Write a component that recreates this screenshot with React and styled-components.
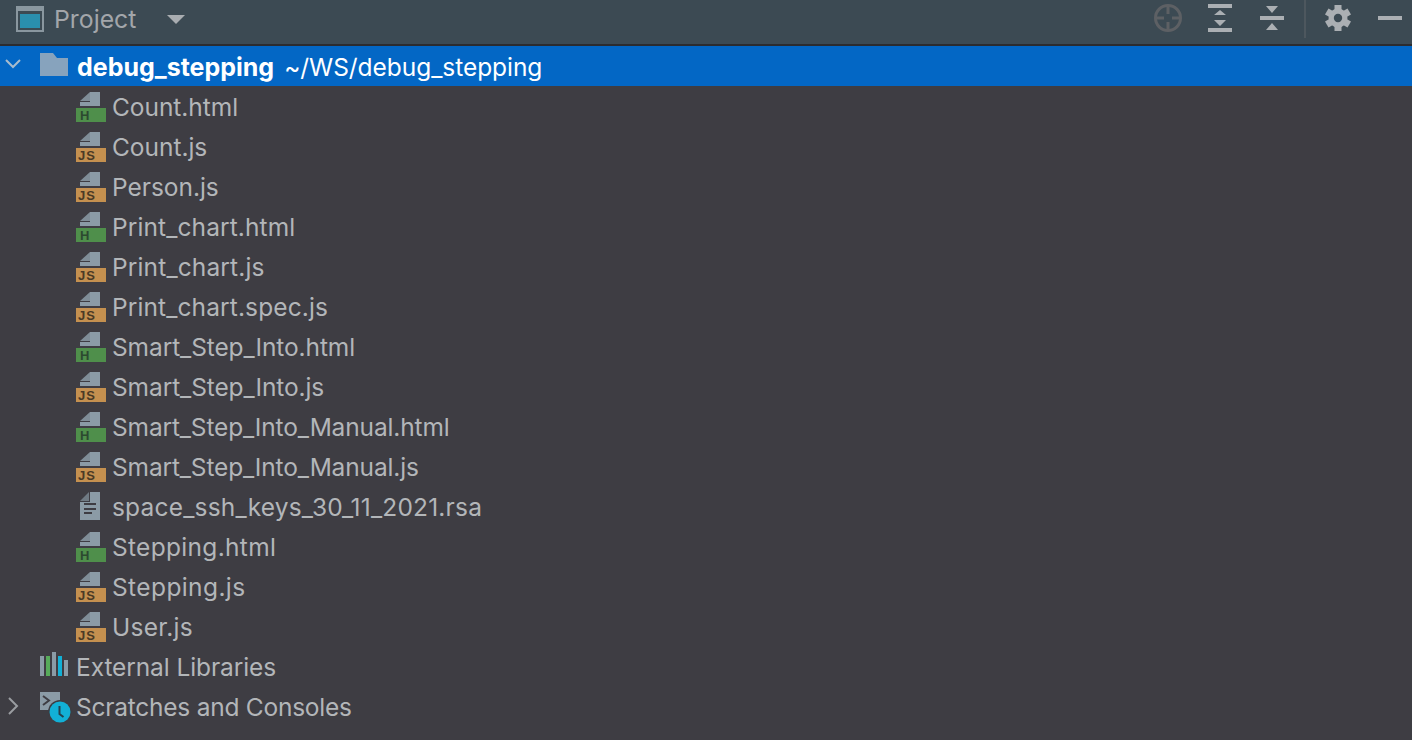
import React from "react";
import styled, { createGlobalStyle } from "styled-components";

const GlobalStyle = createGlobalStyle`
  html, body {
    margin: 0;
    padding: 0;
    background: #3e3d43;
  }
  body {
    font-family: Inter, "Liberation Sans", sans-serif;
  }
`;

// tracking = letter spacing per row, Inter's widths differ a bit from the original font
const files = [
  { name: "Count.html", type: "html", tracking: -0.05 },
  { name: "Count.js", type: "js", tracking: -0.03 },
  { name: "Person.js", type: "js", tracking: -0.04 },
  { name: "Print_chart.html", type: "html", tracking: 0.1 },
  { name: "Print_chart.js", type: "js", tracking: 0.14 },
  { name: "Print_chart.spec.js", type: "js", tracking: 0.11 },
  { name: "Smart_Step_Into.html", type: "html", tracking: -0.1 },
  { name: "Smart_Step_Into.js", type: "js", tracking: -0.1 },
  { name: "Smart_Step_Into_Manual.html", type: "html", tracking: -0.15 },
  { name: "Smart_Step_Into_Manual.js", type: "js", tracking: -0.15 },
  { name: "space_ssh_keys_30_11_2021.rsa", type: "text", tracking: 0.19 },
  { name: "Stepping.html", type: "html", tracking: 0.31 },
  { name: "Stepping.js", type: "js", tracking: 0.4 },
  { name: "User.js", type: "js", tracking: 0.28 },
];

const FileIcon = ({ type }) => {
  if (type === "text") {
    return (
      <svg width="30" height="28" viewBox="0 0 30 28">
        <path d="M14 0h10v28H4V10h10z" fill="#8b9ba6" />
        <path d="M4 9l9-9v9z" fill="#6f7a83" />
        <path d="M8 11h12v2H8zM8 16h12v2H8zM8 20h8v2H8z" fill="#3e3d43" />
      </svg>
    );
  }
  const isHtml = type === "html";
  return (
    <BadgeSvg width="30" height="30" viewBox="0 0 30 30">
      <path d="M4 9l10-9v9z" fill="#7f8d97" />
      <path d="M14 0h10v14H14z" fill="#8b9ba6" />
      <path d="M4 10h20v4H4z" fill="#8b9ba6" />
      <path d="M0 16h30v14H0z" fill={isHtml ? "#4f8f4b" : "#c4904f"} />
      <BadgeText $html={isHtml} x={isHtml ? 4 : 2} y="27.500">
        {isHtml ? "H" : "JS"}
      </BadgeText>
    </BadgeSvg>
  );
};

const ProjectIcon = () => (
  <svg width="28" height="26" viewBox="0 0 28 26">
    <path d="M0 0h28v26H0z" fill="#8a979f" />
    <path d="M2 5h24v19H2z" fill="#3c4a53" />
    <path d="M4 8h20v14H4z" fill="#2a8fae" />
  </svg>
);

const Caret = () => (
  <svg width="18" height="9" viewBox="0 0 18 9">
    <path d="M0 0h18L9 9z" fill="#a9adb1" />
  </svg>
);

const LocateIcon = () => (
  <svg width="30" height="30" viewBox="0 0 30 30" fill="none">
    <circle cx="15" cy="15" r="12.500" stroke="#5d6064" strokeWidth="3" />
    <path d="M15 3v8M15 19v8M3 15h8M19 15h8" stroke="#5d6064" strokeWidth="3" />
  </svg>
);

const ExpandIcon = () => (
  <svg width="24" height="28" viewBox="0 0 24 28">
    <path d="M0 0h24v4H0zM0 24h24v4H0z" fill="#abafb3" />
    <path d="M12 6l6 5H6zM6 16h12l-6 6z" fill="#abafb3" />
  </svg>
);

const CollapseIcon = () => (
  <svg width="24" height="24" viewBox="0 0 24 24">
    <path d="M0 10h24v4H0z" fill="#abafb3" />
    <path d="M6 0h12l-6 7zM12 17l6 7H6z" fill="#abafb3" />
  </svg>
);

const GearIcon = () => (
  <svg width="26" height="26" viewBox="0 0 26 26">
    <circle cx="13" cy="13" r="9.500" fill="#abafb3" />
    {[0, 60, 120].map((angle) => (
      <rect
        key={angle}
        x="9.500"
        y="0"
        width="7"
        height="26"
        fill="#abafb3"
        transform={`rotate(${angle} 13 13)`}
      />
    ))}
    <circle cx="13" cy="13" r="4.200" fill="#3c4a53" />
  </svg>
);

const FolderIcon = () => (
  <svg width="28" height="26" viewBox="0 0 28 26">
    <path d="M0 0h13l4 5h11v18H0z" fill="#87a3bd" />
  </svg>
);

const LibrariesIcon = () => (
  <svg width="28" height="28" viewBox="0 0 28 28">
    <path d="M0 4h4v20H0z" fill="#8b9ba6" />
    <path d="M6 4h4v20H6z" fill="#57ab5a" />
    <path d="M12 0h4v24h-4z" fill="#8b9ba6" />
    <path d="M18 4h4v20h-4z" fill="#12b0d6" />
    <path d="M24 8h4v16h-4z" fill="#8b9ba6" />
  </svg>
);

const ScratchIcon = () => (
  <ScratchSvg width="28" height="28" viewBox="0 0 28 28" fill="none">
    <path d="M0 0h20v18H0z" fill="#8b9ba6" />
    <path d="M3 4l6 4.500-6 4.500" stroke="#3e3d43" strokeWidth="2" />
    <circle cx="20" cy="20" r="12" fill="#3e3d43" />
    <circle cx="20" cy="20" r="10.500" fill="#12b0d6" />
    <path d="M19.500 14v8l4 3" stroke="#26404d" strokeWidth="2" />
  </ScratchSvg>
);

const Chevron = ({ open }) => (
  <svg width="18" height="18" viewBox="0 0 18 18" fill="none">
    <path
      d={open ? "M2 3l7 7 7-7" : "M5 1l8 8-8 8"}
      stroke={open ? "#a9bccd" : "#9a9da1"}
      strokeWidth="2"
    />
  </svg>
);

const App = () => {
  return (
    <Page>
      <GlobalStyle />
      <Toolbar>
        <ProjectIcon />
        <ToolbarTitle>Project</ToolbarTitle>
        <Caret />
        <ToolbarActions>
          <Action>
            <LocateIcon />
          </Action>
          <Action $left={25}>
            <ExpandIcon />
          </Action>
          <Action $left={28}>
            <CollapseIcon />
          </Action>
          <Separator />
          <Action $left={19}>
            <GearIcon />
          </Action>
          <MinimizeBar />
        </ToolbarActions>
      </Toolbar>
      <Tree>
        <RootRow>
          <Toggle>
            <Chevron open />
          </Toggle>
          <FolderIcon />
          <RootName>debug_stepping</RootName>
          <RootPath>~/WS/debug_stepping</RootPath>
        </RootRow>
        {files.map((file) => (
          <FileRow key={file.name}>
            <FileIcon type={file.type} />
            <FileLabel $tracking={file.tracking}>{file.name}</FileLabel>
          </FileRow>
        ))}
        <Row>
          <Toggle />
          <LibrariesIcon />
          <RowLabel $tracking={-0.1}>External Libraries</RowLabel>
        </Row>
        <Row>
          <Toggle>
            <Chevron />
          </Toggle>
          <ScratchIcon />
          <RowLabel $tracking={-0.24}>Scratches and Consoles</RowLabel>
        </Row>
      </Tree>
    </Page>
  );
};

export default App;

const Page = styled.div`
  width: 1412px;
  height: 740px;
  overflow: hidden;
  background: #3e3d43;
`;
const Toolbar = styled.div`
  display: flex;
  align-items: center;
  height: 38px;
  padding: 0 10px 6px 16px;
  background: #3c4a53;
  border-bottom: 2px solid #2c2c2f;
`;
const ToolbarTitle = styled.div`
  margin: 0 31px 0 10px;
  font-size: 24.800px;
  color: #a3a6aa;
  line-height: 38px;
`;
const ToolbarActions = styled.div`
  display: flex;
  align-items: center;
  margin-left: auto;
  height: 36px;
  align-self: flex-start;
`;
const Action = styled.div`
  display: flex;
  margin-left: ${(props) => props.$left || 0}px;
`;
const Separator = styled.div`
  align-self: flex-start;
  width: 2px;
  height: 38px;
  margin-left: 20px;
  background: #4d575e;
`;
const MinimizeBar = styled.div`
  width: 24px;
  height: 4px;
  margin-left: 27px;
  background: #abafb3;
`;
const Tree = styled.div`
  display: flex;
  flex-direction: column;
`;
const Row = styled.div`
  display: flex;
  align-items: center;
  height: 40px;
`;
const RootRow = styled(Row)`
  background: #0367c5;
`;
const FileRow = styled(Row)`
  padding-left: 76px;
`;
const Toggle = styled.div`
  display: flex;
  align-items: center;
  justify-content: center;
  width: 40px;
  padding-right: 14px;
  box-sizing: border-box;
`;
const RowLabel = styled.div`
  margin-left: 8px;
  padding-top: 2px;
  font-size: 24.500px;
  letter-spacing: ${(props) => props.$tracking}px;
  color: #b3b6b9;
  white-space: nowrap;
`;
const FileLabel = styled(RowLabel)`
  margin-left: 6px;
`;
const RootName = styled.div`
  margin-left: 9px;
  padding-top: 2px;
  font-size: 25px;
  font-weight: 700;
  color: #ffffff;
`;
const RootPath = styled.div`
  margin-left: 10px;
  padding-top: 2px;
  font-size: 24.500px;
  letter-spacing: -0.05px;
  color: #ffffff;
`;
const BadgeSvg = styled.svg`
  margin-top: 2px;
`;
const ScratchSvg = styled.svg`
  overflow: visible;
`;
const BadgeText = styled.text`
  font-family: "Liberation Sans", sans-serif;
  font-size: 13px;
  font-weight: 700;
  letter-spacing: 1px;
  fill: ${(props) => (props.$html ? "#2c4a30" : "#4a3a25")};
`;
